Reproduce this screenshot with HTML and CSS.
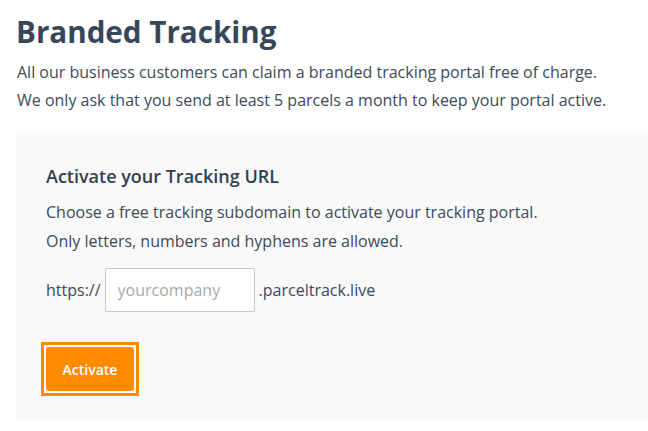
FILE: index.html
```html
<!DOCTYPE html>
<html lang="en">

<head>
  <meta charset="utf-8">
  <meta name="viewport" content="width=device-width, initial-scale=1">
  <title>Branded Tracking</title>
  <link rel="stylesheet" href="styles.css">
</head>

<body>
  <main id="page">
    <h1 id="title">Branded Tracking</h1>
    <p class="lead">
      All our business customers can claim a branded tracking portal free of charge.<br>
      We only ask that you send at least 5 parcels a month to keep your portal active.
    </p>

    <section id="panel">
      <h2 id="panelTitle">Activate your Tracking URL</h2>
      <p class="hint">
        Choose a free tracking subdomain to activate your tracking portal.<br>
        Only letters, numbers and hyphens are allowed.
      </p>
      <form id="urlform">
        <div class="urlrow">
          <span>https://</span>
          <input id="subdomain" type="text" placeholder="yourcompany">
          <span>.parceltrack.live</span>
        </div>
        <!-- focus ring is square, so it sits on a wrapper -->
        <div class="focusring">
          <button id="activate" type="button">Activate</button>
        </div>
      </form>
    </section>
  </main>
</body>

</html>
```

FILE: styles.css
```css
html {
  background-color: #ffffff;
  color: #3b4a5a;
}

body {
  margin: 0;
  font-family: "Open Sans", "Liberation Sans", sans-serif;
}

#page {
  padding: 12px 0 0 16px;
}

#title {
  margin: 0;
  font-size: 29.6px;
  font-weight: 700;
  line-height: 40px;
  color: #37475a;
}

.lead {
  margin: 6px 0 0 1px;
  font-size: 16px;
  line-height: 28px;
}

#panel {
  margin-top: 17px;
  background-color: #f9f9f9;
  padding: 33px 30px 24px 30px;
}

#panelTitle {
  margin: 0;
  font-size: 18px;
  font-weight: 600;
  line-height: 24px;
  color: #323f4d;
}

.hint {
  margin: 10px 0 0 0;
  font-size: 16px;
  line-height: 29px;
}

.urlrow {
  display: flex;
  align-items: center;
  gap: 4px;
  margin-top: 12px;
  font-size: 16px;
}

#subdomain {
  box-sizing: border-box;
  width: 150px;
  height: 44px;
  padding: 0 12px;
  border: 1px solid #c8c8c8;
  border-radius: 2px;
  font-family: inherit;
  font-size: 16px;
  color: #3b4a5a;
  background: #ffffff;
}

#subdomain::placeholder {
  color: #a9a9a9;
}

.focusring {
  width: fit-content;
  margin: 30px 0 0 -5px;
  padding: 2px;
  border: 3px solid #ff8a00;
  background-color: #ffffff;
}

#activate {
  display: block;
  width: 88px;
  height: 44px;
  border: none;
  border-radius: 3px;
  background-color: #ff8a00;
  color: #ffffff;
  font-family: inherit;
  font-size: 14px;
  font-weight: 600;
  outline: none;
}
```
